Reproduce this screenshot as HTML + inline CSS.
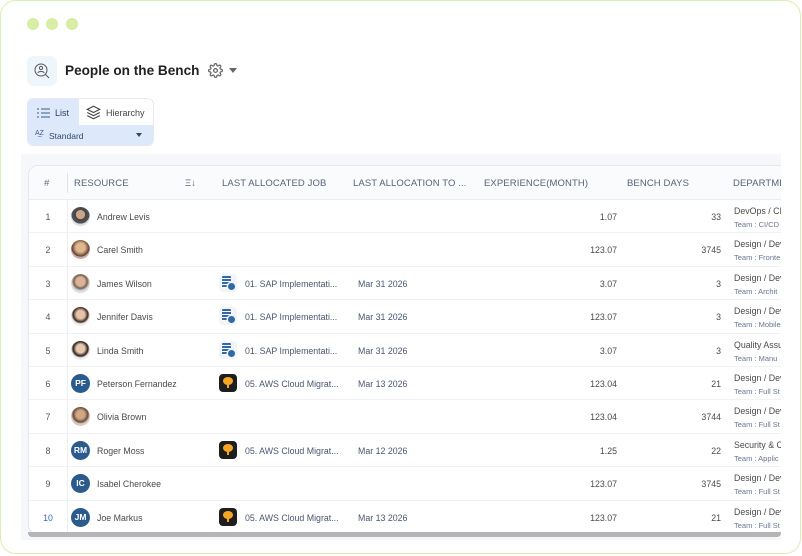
<!DOCTYPE html>
<html><head><meta charset="utf-8"><style>
*{margin:0;padding:0;box-sizing:border-box}
body{width:802px;height:556px;background:#fff;font-family:"Liberation Sans",sans-serif;position:relative;overflow:hidden;color:#333}
.frame{position:absolute;left:0;top:0;width:801px;height:554px;border:1.5px solid #dcedb4;border-radius:16px}
.dot{position:absolute;top:18px;width:12px;height:12px;border-radius:50%;background:#d8eda6}
.abs{position:absolute}
.bg{position:absolute;left:21px;top:154px;width:760px;height:386px;background:#f5f7fb}
.card{position:absolute;left:28px;top:165px;width:770px;height:370px;background:#fff;border:1px solid #e3e7ee;border-radius:10px;overflow:hidden}
.clip{position:absolute;left:0;top:0;width:781px;height:556px;overflow:hidden}
.hdr{position:absolute;top:0;left:0;right:0;height:34px;background:#fafbfc;border-bottom:1px solid #e8ebf0}
.h{position:absolute;top:12px;font-size:9.5px;color:#56647c;letter-spacing:.1px}
.row{position:absolute;left:0;right:0;height:33.4px;border-bottom:1px solid #f1f2f5;font-size:8.8px;color:#4a4a4a}
.row span{position:absolute}
.num{left:0;width:38px;text-align:center;top:12px;color:#555}
.vd{position:absolute;left:38px;top:0;bottom:0;width:1px;background:#eceef2}
.av{left:42px;top:7px;width:19px;height:19px;border-radius:50%}
.ini{background:#2b5a8c;color:#fff;font-weight:bold;font-size:8.5px;text-align:center;line-height:19px}
.nm{left:68px;top:12px}
.ic{left:190px;top:7px;width:18px;height:18px;border-radius:4px}
.job{left:216px;top:12px;color:#4a5670}
.dt{left:329px;top:12px;color:#4a5670}
.exp{right:180px;top:12px}
.bd{right:76px;top:12px}
.dep{left:705px;top:5px;line-height:13px;white-space:nowrap}
.dep i{font-style:normal;font-size:7.5px;color:#6a7590;display:block}
.sb{position:absolute;left:28px;top:532px;width:753px;height:5px;background:#b5b5b5;border-radius:0 0 4px 4px}
</style></head><body>
<div class="frame"></div>
<div class="dot" style="left:27px"></div><div class="dot" style="left:46px"></div><div class="dot" style="left:66px"></div>
<div class="abs" style="left:27px;top:56px;width:30px;height:30px;border-radius:7px;background:#eef5fb"></div>
<svg class="abs" style="left:33px;top:62px" width="18" height="18" viewBox="0 0 18 18" fill="none" stroke="#555" stroke-width="1"><circle cx="8" cy="8" r="6"/><line x1="12.5" y1="12.5" x2="16" y2="16"/><circle cx="8" cy="6" r="1.6"/><path d="M5 11c0-2 6-2 6 0"/></svg>
<div class="abs" style="left:65px;top:63px;font-size:13.6px;font-weight:bold;color:#222">People on the Bench</div>
<svg class="abs" style="left:208px;top:63px" width="15" height="15" viewBox="0 0 24 24" fill="none" stroke="#666" stroke-width="2"><circle cx="12" cy="12" r="3"/><path d="M19.4 15a1.7 1.7 0 0 0 .3 1.8l.1.1a2 2 0 1 1-2.8 2.8l-.1-.1a1.7 1.7 0 0 0-1.8-.3 1.7 1.7 0 0 0-1 1.5V21a2 2 0 1 1-4 0v-.1a1.7 1.7 0 0 0-1.1-1.5 1.7 1.7 0 0 0-1.8.3l-.1.1a2 2 0 1 1-2.8-2.8l.1-.1a1.7 1.7 0 0 0 .3-1.8 1.7 1.7 0 0 0-1.5-1H3a2 2 0 1 1 0-4h.1a1.7 1.7 0 0 0 1.5-1.1 1.7 1.7 0 0 0-.3-1.8l-.1-.1a2 2 0 1 1 2.8-2.8l.1.1a1.7 1.7 0 0 0 1.8.3H9a1.7 1.7 0 0 0 1-1.5V3a2 2 0 1 1 4 0v.1a1.7 1.7 0 0 0 1 1.5 1.7 1.7 0 0 0 1.8-.3l.1-.1a2 2 0 1 1 2.8 2.8l-.1.1a1.7 1.7 0 0 0-.3 1.8V9a1.7 1.7 0 0 0 1.5 1H21a2 2 0 1 1 0 4h-.1a1.7 1.7 0 0 0-1.5 1z"/></svg>
<div class="abs" style="left:229px;top:68px;border:4.5px solid transparent;border-top:5px solid #666;border-bottom:0"></div>
<div class="abs" style="left:27px;top:98px;width:127px;height:48px;border:1px solid #e6eaf0;border-radius:6px;background:#fff"></div>
<div class="abs" style="left:28px;top:99px;width:51px;height:27px;background:#dde9fb;border-radius:5px 0 0 0"></div>
<div class="abs" style="left:28px;top:125px;width:125px;height:20px;background:#dde9fb;border-radius:0 0 5px 5px"></div>
<svg class="abs" style="left:37px;top:108px" width="13" height="10" viewBox="0 0 13 10" stroke="#3c5a80" stroke-width="1"><line x1="0" y1="1" x2="2" y2="1"/><line x1="4" y1="1" x2="13" y2="1"/><line x1="0" y1="5" x2="2" y2="5"/><line x1="4" y1="5" x2="13" y2="5"/><line x1="0" y1="9" x2="2" y2="9"/><line x1="4" y1="9" x2="13" y2="9"/></svg>
<div class="abs" style="left:55px;top:108px;font-size:9px;color:#2c3e5c">List</div>
<svg class="abs" style="left:86px;top:105px" width="15" height="15" viewBox="0 0 24 24" fill="none" stroke="#444" stroke-width="1.8"><path d="M12 2 2 7l10 5 10-5z"/><path d="m2 12 10 5 10-5"/><path d="m2 17 10 5 10-5"/></svg>
<div class="abs" style="left:106px;top:108px;font-size:9px;color:#444">Hierarchy</div>
<div class="abs" style="left:35px;top:130px;font-size:7px;color:#3c5a80">A͢Z</div>
<div class="abs" style="left:49px;top:131px;font-size:8.5px;color:#2c4a70">Standard</div>
<div class="abs" style="left:136px;top:133px;border:3.5px solid transparent;border-top:4px solid #2c4a70;border-bottom:0"></div>
<div class="clip">
<div class="bg"></div>
<div class="card">
<div class="hdr">
<span class="h" style="left:15px">#</span>
<div style="position:absolute;left:38px;top:7px;height:20px;width:1px;background:#e0e3e8"></div>
<span class="h" style="left:45px">RESOURCE</span>
<span class="h" style="left:156px">Ξ↓</span>
<span class="h" style="left:193px">LAST ALLOCATED JOB</span>
<span class="h" style="left:324px">LAST ALLOCATION TO ...</span>
<span class="h" style="left:455px">EXPERIENCE(MONTH)</span>
<span class="h" style="left:598px">BENCH DAYS</span>
<span class="h" style="left:704px">DEPARTMENT</span>
</div>
<div style="position:absolute;top:34px;left:0;right:0">
<div class="row" style="top:0"><span class="num">1</span><div class="vd"></div><span class="av" style="background:radial-gradient(circle at 50% 40%,#c9a58a 30%,#444 32%,#555 60%,#ddd 62%)"></span><span class="nm">Andrew Levis</span><span class="exp">1.07</span><span class="bd">33</span><span class="dep">DevOps / CI<i>Team : CI/CD</i></span></div>
<div class="row" style="top:33.4px"><span class="num">2</span><div class="vd"></div><span class="av" style="background:radial-gradient(circle at 50% 40%,#e0b890 30%,#5a3a28 60%,#caa 62%)"></span><span class="nm">Carel Smith</span><span class="exp">123.07</span><span class="bd">3745</span><span class="dep">Design / Dev<i>Team : Fronte</i></span></div>
<div class="row" style="top:66.8px"><span class="num">3</span><div class="vd"></div><span class="av" style="background:radial-gradient(circle at 50% 40%,#d9b49a 30%,#7a6050 45%,#ddd 62%)"></span><span class="nm">James Wilson</span><span class="ic sap"></span><span class="job">01. SAP Implementati...</span><span class="dt">Mar 31 2026</span><span class="exp">3.07</span><span class="bd">3</span><span class="dep">Design / Dev<i>Team : Archit</i></span></div>
<div class="row" style="top:100.2px"><span class="num">4</span><div class="vd"></div><span class="av" style="background:radial-gradient(circle at 50% 40%,#e6c3a8 28%,#3a2a22 50%,#eee 62%)"></span><span class="nm">Jennifer Davis</span><span class="ic sap"></span><span class="job">01. SAP Implementati...</span><span class="dt">Mar 31 2026</span><span class="exp">123.07</span><span class="bd">3</span><span class="dep">Design / Dev<i>Team : Mobile</i></span></div>
<div class="row" style="top:133.6px"><span class="num">5</span><div class="vd"></div><span class="av" style="background:radial-gradient(circle at 50% 40%,#e8c8b0 28%,#2a1e1a 50%,#eee 62%)"></span><span class="nm">Linda Smith</span><span class="ic sap"></span><span class="job">01. SAP Implementati...</span><span class="dt">Mar 31 2026</span><span class="exp">3.07</span><span class="bd">3</span><span class="dep">Quality Assu<i>Team : Manu</i></span></div>
<div class="row" style="top:167px"><span class="num">6</span><div class="vd"></div><span class="av ini">PF</span><span class="nm">Peterson Fernandez</span><span class="ic aws"></span><span class="job">05. AWS Cloud Migrat...</span><span class="dt">Mar 13 2026</span><span class="exp">123.04</span><span class="bd">21</span><span class="dep">Design / Dev<i>Team : Full St</i></span></div>
<div class="row" style="top:200.4px"><span class="num">7</span><div class="vd"></div><span class="av" style="background:radial-gradient(circle at 50% 40%,#d0a888 28%,#6a4a3a 50%,#d8ccc0 62%)"></span><span class="nm">Olivia Brown</span><span class="exp">123.04</span><span class="bd">3744</span><span class="dep">Design / Dev<i>Team : Full St</i></span></div>
<div class="row" style="top:233.8px"><span class="num">8</span><div class="vd"></div><span class="av ini">RM</span><span class="nm">Roger Moss</span><span class="ic aws"></span><span class="job">05. AWS Cloud Migrat...</span><span class="dt">Mar 12 2026</span><span class="exp">1.25</span><span class="bd">22</span><span class="dep">Security &amp; C<i>Team : Applic</i></span></div>
<div class="row" style="top:267.2px"><span class="num">9</span><div class="vd"></div><span class="av ini">IC</span><span class="nm">Isabel Cherokee</span><span class="exp">123.07</span><span class="bd">3745</span><span class="dep">Design / Dev<i>Team : Full St</i></span></div>
<div class="row" style="top:300.6px"><span class="num" style="color:#3a6ab0">10</span><div class="vd"></div><span class="av ini">JM</span><span class="nm">Joe Markus</span><span class="ic aws"></span><span class="job">05. AWS Cloud Migrat...</span><span class="dt">Mar 13 2026</span><span class="exp">123.07</span><span class="bd">21</span><span class="dep">Design / Dev<i>Team : Full St</i></span></div>
</div>
</div>
<div class="sb"></div>
</div>
<style>
.sap{background:#f2f4f7}
.sap::before{content:"";position:absolute;left:3px;top:2px;width:9px;height:12px;background:repeating-linear-gradient(#2e6aa8 0 2px,#fff 2px 3px);border-radius:1px}
.sap::after{content:"";position:absolute;left:9px;top:9px;width:7px;height:7px;border-radius:50%;background:#2e6aa8;box-shadow:0 0 0 1.5px #f2f4f7}
.aws{background:#1e1e1e}
.aws::before{content:"";position:absolute;left:4px;top:3px;width:10px;height:8px;border-radius:50%;background:#f5a623}
.aws::after{content:"";position:absolute;left:8px;top:10px;width:2px;height:4px;background:#f5a623}
</style>
</body></html>
